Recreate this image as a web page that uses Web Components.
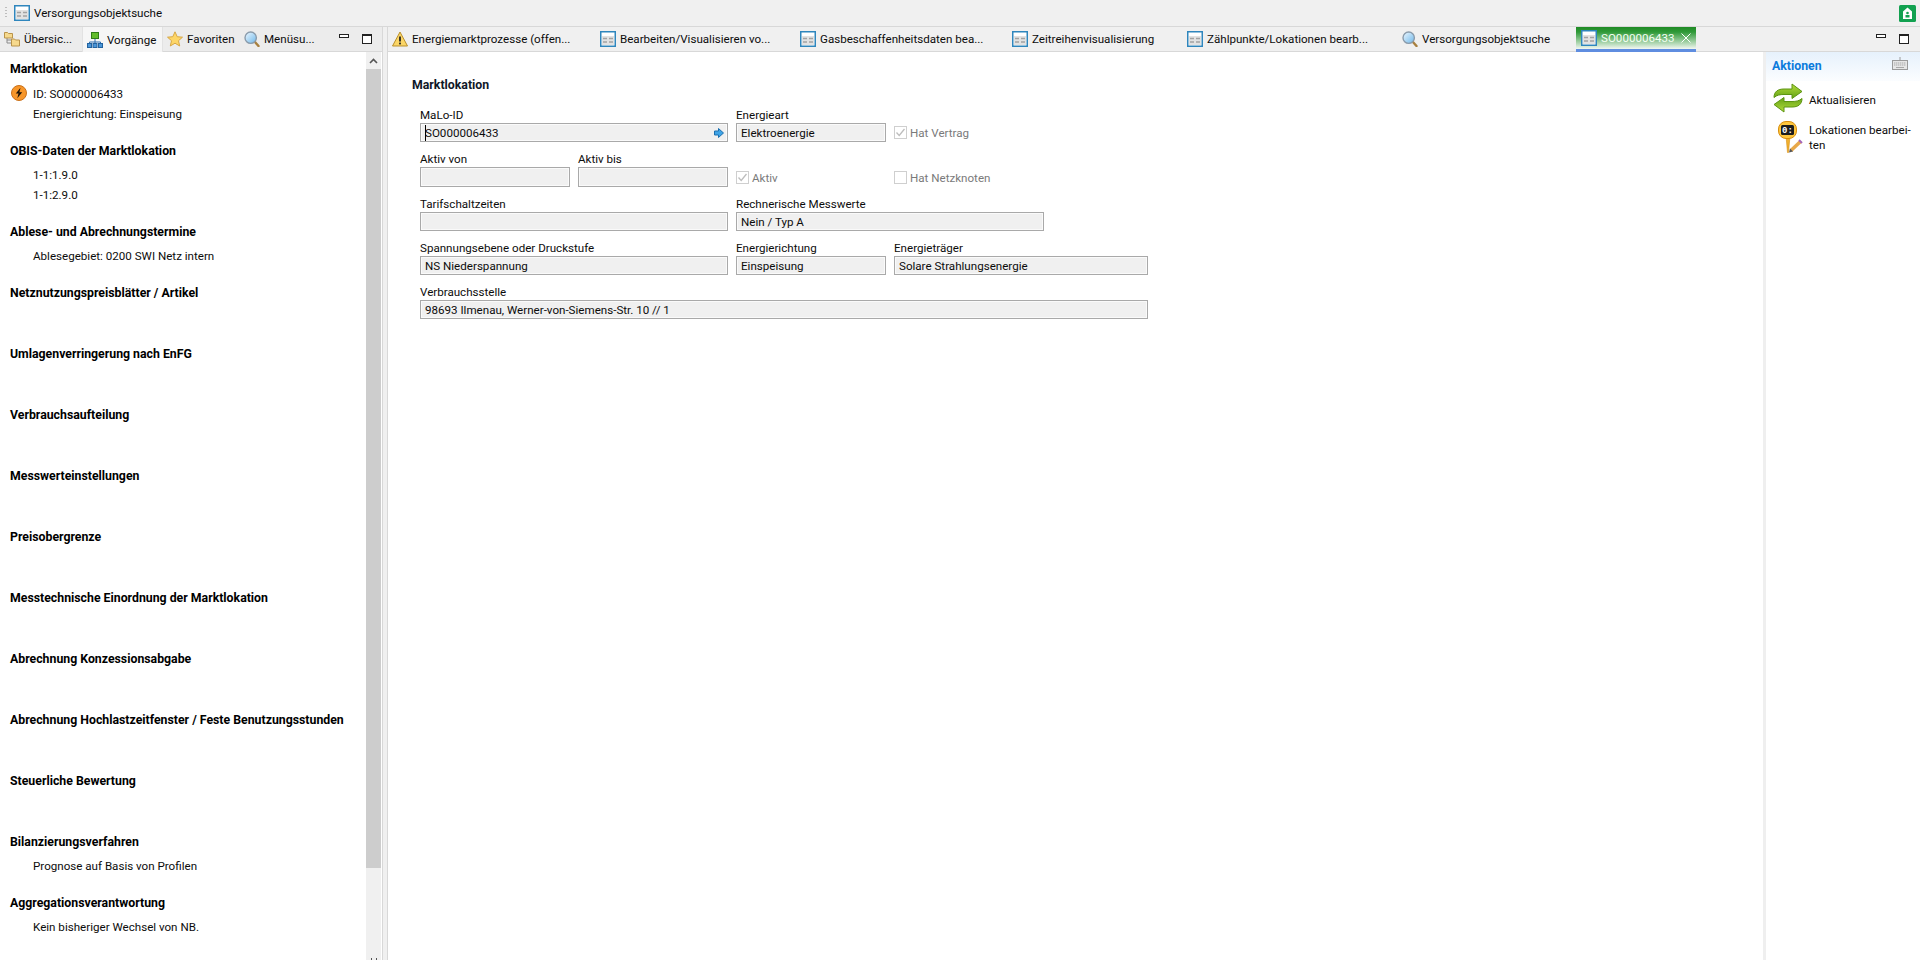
<!DOCTYPE html>
<html lang="de">
<head>
<meta charset="utf-8">
<title>Versorgungsobjektsuche</title>
<style>
  html, body { margin: 0; height: 100%; overflow: hidden; background: #f0f0f0; }
  body { font: 11.6px/16px Roboto, "Liberation Sans", sans-serif; color: #0c0c0c; }
  sw-workbench { height: 960px; }
</style>
</head>
<body>
<sw-workbench>
  <sw-toolbar slot="top" icon="form">Versorgungsobjektsuche</sw-toolbar>

  <sw-view slot="left">
    <sw-tab slot="tabs" icon="tree" width="82">Übersic...</sw-tab>
    <sw-tab slot="tabs" icon="process" width="81" selected>Vorgänge</sw-tab>
    <sw-tab slot="tabs" icon="star" width="77">Favoriten</sw-tab>
    <sw-tab slot="tabs" icon="search" width="81">Menüsu...</sw-tab>
    <sw-outline>
      <sw-section title="Marktlokation">
        <sw-row icon="energy" style="height: 21px">ID: SO000006433</sw-row>
        <sw-row>Energierichtung: Einspeisung</sw-row>
      </sw-section>
      <sw-section title="OBIS-Daten der Marktlokation">
        <sw-row>1-1:1.9.0</sw-row>
        <sw-row>1-1:2.9.0</sw-row>
      </sw-section>
      <sw-section title="Ablese- und Abrechnungstermine">
        <sw-row>Ablesegebiet: 0200 SWI Netz intern</sw-row>
      </sw-section>
      <sw-section title="Netznutzungspreisblätter / Artikel"></sw-section>
      <sw-section title="Umlagenverringerung nach EnFG"></sw-section>
      <sw-section title="Verbrauchsaufteilung"></sw-section>
      <sw-section title="Messwerteinstellungen"></sw-section>
      <sw-section title="Preisobergrenze"></sw-section>
      <sw-section title="Messtechnische Einordnung der Marktlokation"></sw-section>
      <sw-section title="Abrechnung Konzessionsabgabe"></sw-section>
      <sw-section title="Abrechnung Hochlastzeitfenster / Feste Benutzungsstunden"></sw-section>
      <sw-section title="Steuerliche Bewertung"></sw-section>
      <sw-section title="Bilanzierungsverfahren">
        <sw-row>Prognose auf Basis von Profilen</sw-row>
      </sw-section>
      <sw-section title="Aggregationsverantwortung">
        <sw-row>Kein bisheriger Wechsel von NB.</sw-row>
      </sw-section>
    </sw-outline>
  </sw-view>

  <sw-view slot="main" plain>
    <sw-tab slot="tabs" icon="warning" width="208">Energiemarktprozesse (offen...</sw-tab>
    <sw-tab slot="tabs" icon="form" width="200">Bearbeiten/Visualisieren vo...</sw-tab>
    <sw-tab slot="tabs" icon="form" width="212">Gasbeschaffenheitsdaten bea...</sw-tab>
    <sw-tab slot="tabs" icon="form" width="175">Zeitreihenvisualisierung</sw-tab>
    <sw-tab slot="tabs" icon="form" width="215">Zählpunkte/Lokationen bearb...</sw-tab>
    <sw-tab slot="tabs" icon="search" width="178">Versorgungsobjektsuche</sw-tab>
    <sw-tab slot="tabs" icon="form" width="120" hot>SO000006433</sw-tab>

    <sw-editor>
      <sw-form title="Marktlokation">
        <sw-field label="MaLo-ID" value="SO000006433" link style="grid-column: 1 / 3"></sw-field>
        <sw-field label="Energieart" value="Elektroenergie" style="grid-column: 3"></sw-field>
        <sw-check checked style="grid-column: 4 / 6">Hat Vertrag</sw-check>

        <sw-field label="Aktiv von" style="grid-column: 1"></sw-field>
        <sw-field label="Aktiv bis" style="grid-column: 2"></sw-field>
        <sw-check checked style="grid-column: 3">Aktiv</sw-check>
        <sw-check style="grid-column: 4 / 6">Hat Netzknoten</sw-check>

        <sw-field label="Tarifschaltzeiten" style="grid-column: 1 / 3"></sw-field>
        <sw-field label="Rechnerische Messwerte" value="Nein / Typ A" style="grid-column: 3 / 5"></sw-field>

        <sw-field label="Spannungsebene oder Druckstufe" value="NS Niederspannung" style="grid-column: 1 / 3"></sw-field>
        <sw-field label="Energierichtung" value="Einspeisung" style="grid-column: 3"></sw-field>
        <sw-field label="Energieträger" value="Solare Strahlungsenergie" style="grid-column: 4 / 6"></sw-field>

        <sw-field label="Verbrauchsstelle" value="98693 Ilmenau, Werner-von-Siemens-Str. 10 // 1" style="grid-column: 1 / 6"></sw-field>
      </sw-form>

      <sw-actions slot="side" title="Aktionen">
        <sw-action icon="sync" pad="10">Aktualisieren</sw-action>
        <sw-action icon="pin" pad="2">Lokationen bearbei-ten</sw-action>
      </sw-actions>
    </sw-editor>
  </sw-view>
</sw-workbench>

<script>
// All icons are drawn on a 16 grid unless they bring their own viewBox
const ICONS = {
  form: `<svg width="16" height="16" viewBox="0 0 16 16">
      <rect x=".75" y=".75" width="14.500" height="14.500" fill="#fff" stroke="#2f86bd" stroke-width="1.500"/>
      <rect x="2" y="5" width="12" height="9" fill="#e2e2e2"/>
      <path d="M3 7.500h4M9 7.500h4M3 11h4M9 11h4" stroke="#a2a2a2" stroke-width="1.400"/>
    </svg>`,
  warning: `<svg width="16" height="16" viewBox="0 0 16 16">
      <path d="M8 1 15.500 15H.5z" fill="#fbd667" stroke="#b98f2c" stroke-linejoin="round"/>
      <path d="M8 5.500v5" stroke="#222" stroke-width="1.800"/>
      <rect x="7.100" y="11.600" width="1.800" height="1.800" fill="#222"/>
    </svg>`,
  search: `<svg width="16" height="16" viewBox="0 0 16 16">
      <defs><linearGradient id="g" x1="0" y1="0" x2="1" y2="1"><stop offset="0" stop-color="#eef8ff"/><stop offset="1" stop-color="#6db7ea"/></linearGradient></defs>
      <path d="M10.500 10.500 14.500 15" stroke="#a8803f" stroke-width="2.400" stroke-linecap="round"/>
      <circle cx="6.700" cy="6.700" r="5.700" fill="url(#g)" stroke="#8a9bab" stroke-width="1.400"/>
    </svg>`,
  tree: `<svg width="16" height="16" viewBox="0 0 16 16">
      <path d="M3 7v5h5M3 9h4" fill="none" stroke="#8a8a8a"/>
      <path d="M.5 1.500h3l1 1h4v4.500h-8z" fill="#f6d98d" stroke="#b9934a"/>
      <path d="M7.500 8h3l1 1h4v6h-8z" fill="#f6d98d" stroke="#b9934a"/>
    </svg>`,
  process: `<svg width="16" height="16" viewBox="0 0 16 16">
      <rect x="4.500" y=".5" width="7" height="6" fill="#62bd2c" stroke="#2f7d18"/>
      <path d="M8 7v3M2.500 12v-2h11v2M8 10v2" fill="none" stroke="#2d6fb0"/>
      <rect x=".5" y="11.500" width="4" height="4" fill="#4b96d8" stroke="#23639f"/>
      <rect x="6" y="11.500" width="4" height="4" fill="#4b96d8" stroke="#23639f"/>
      <rect x="11.500" y="11.500" width="4" height="4" fill="#4b96d8" stroke="#23639f"/>
    </svg>`,
  star: `<svg width="16" height="16" viewBox="0 0 16 16">
      <path d="M8 .8 10.200 5.700 15.500 6.200 11.500 9.700 12.700 15 8 12.200 3.300 15 4.500 9.700 .5 6.200 5.800 5.700z" fill="#fdd667" stroke="#d7a745" stroke-linejoin="round"/>
    </svg>`,
  energy: `<svg width="16" height="16" viewBox="0 0 16 16">
      <circle cx="8" cy="8" r="7.500" fill="#f7962a" stroke="#c9701a"/>
      <path d="M9.500 2.800 4.800 8.600h2.700L6.300 13.200 11.200 7.200H8.400z" fill="#1b1208"/>
    </svg>`,
  sync: `<svg width="30" height="30" viewBox="0 0 30 30">
      <defs><linearGradient id="s" x1="0" y1="0" x2="0" y2="1"><stop offset="0" stop-color="#b4dc3c"/><stop offset="1" stop-color="#64a316"/></linearGradient></defs>
      <path id="a" d="M1 14.500C1 8.500 5 6 11 6h8V1l10 7.500L19 15.500V11.500h-8C7 11.500 4 12 1 14.500z" fill="url(#s)" stroke="#5c9412" stroke-linejoin="round"/>
      <use href="#a" transform="rotate(180 15 15)"/>
    </svg>`,
  pin: `<svg width="30" height="32" viewBox="-5 0 30 32">
      <path d="M8 15h4L10.500 31.500h-1z" fill="#f0b030" stroke="#d88e10" stroke-width=".6"/>
      <rect x=".5" y=".5" width="18" height="17" rx="7.500" fill="#fdc63e" stroke="#d88e10"/>
      <rect x="3" y="4" width="13" height="10" rx="1.500" fill="#1c1c1c"/>
      <text x="9.500" y="12" font-size="9" font-weight="700" fill="#fff" text-anchor="middle" font-family="Liberation Mono, monospace">0:</text>
      <path d="M13 29.500 22.500 20.500" stroke="#e8a84a" stroke-width="3.600"/>
      <path d="M21 19 24 22" stroke="#a566b8" stroke-width="2"/>
      <path d="M11 31.500 12 27.500 15 30.500z" fill="#555"/>
    </svg>`,
  keyboard: `<svg width="16" height="13" viewBox="0 0 16 13">
      <path d="M8 0v3" stroke="#9a9a9a"/>
      <rect x=".5" y="3.500" width="15" height="9" fill="#e6e6e6" stroke="#9a9a9a"/>
      <path d="M2 6h12M2 8h12" stroke="#a8a8a8" stroke-dasharray="1.400 .6"/>
      <path d="M4 10.500h8" stroke="#a8a8a8"/>
    </svg>`,
  lock: `<svg width="17" height="17" viewBox="0 0 17 17">
      <rect width="17" height="17" rx="1.500" fill="#12a150"/>
      <path d="M8.500 2.500 13 6.500V14H4V6.500z" fill="#fff"/>
      <circle cx="8.500" cy="8" r="1.300" fill="#12a150"/>
      <rect x="6.500" y="10" width="4" height="2.500" fill="#12a150"/>
    </svg>`,
  arrow: `<svg width="10" height="10" viewBox="0 0 10 10">
      <path d="M.5 3h4V.5L9.500 5l-5 4.500V7h-4z" fill="#3fa4e6" stroke="#1b6fb0"/>
    </svg>`
};

class SwIcon extends HTMLElement {
  connectedCallback() {
    if(!this.shadowRoot) this.attachShadow({ mode: 'open' });
    this.shadowRoot.innerHTML = `
      <style>
        :host { display: inline-flex; flex: none; line-height: 0; }
      </style>
      ${ICONS[this.getAttribute('name')] || ''}
    `;
  }
}

class SwWorkbench extends HTMLElement {
  constructor() {
    super();
    this._root = this.attachShadow({ mode: 'open' });
  }

  connectedCallback() {
    this._root.innerHTML = `
      <style>
        :host { display: flex; flex-direction: column; }
        .panes { flex: 1; min-height: 0; display: flex; }
        ::slotted([slot="left"]) { width: 383px; flex: none; }
        ::slotted([slot="main"]) { flex: 1; min-width: 0; margin-left: 4px; }
      </style>
      <slot name="top"></slot>
      <div class="panes">
        <slot name="left"></slot>
        <slot name="main"></slot>
      </div>
    `;
  }
}

class SwToolbar extends HTMLElement {
  constructor() {
    super();
    this._root = this.attachShadow({ mode: 'open' });
  }

  connectedCallback() {
    this._root.innerHTML = `
      <style>
        :host {
          display: flex;
          align-items: center;
          height: 26px;
          padding: 0 4px 0 5px;
          background: #f0f0f0;
          border-bottom: 1px solid #d8d8d8;
          box-sizing: content-box;
        }
        .grip {
          width: 2px;
          height: 12px;
          margin-right: 7px;
          background: repeating-linear-gradient(#bdbdbd 0 1px, transparent 1px 3px);
        }
        .label { margin-left: 4px; flex: 1; }
      </style>
      <div class="grip"></div>
      <sw-icon name="${this.getAttribute('icon')}"></sw-icon>
      <div class="label"><slot></slot></div>
      <sw-icon name="lock"></sw-icon>
    `;
  }
}

class SwView extends HTMLElement {
  constructor() {
    super();
    this._root = this.attachShadow({ mode: 'open' });
  }

  connectedCallback() {
    this._root.innerHTML = `
      <style>
        :host {
          display: flex;
          flex-direction: column;
          min-height: 0;
          background: #fff;
          border-right: 1px solid #d8d8d8;
          box-sizing: border-box;
        }
        :host([plain]) { border-right: 0; border-left: 1px solid #d8d8d8; }
        .strip {
          display: flex;
          height: 25px;
          flex: none;
          box-sizing: border-box;
          background: #ececec;
          border-bottom: 1px solid #d8d8d8;
        }
        :host([plain]) .strip { background: #f0f0f0; }
        .controls {
          margin-left: auto;
          display: flex;
          gap: 13px;
          padding: 7px 10px 0 0;
        }
        :host([plain]) .controls { padding-right: 11px; }
        .min { width: 8px; height: 2px; border: 1px solid #222; background: #fff; }
        .max { width: 8px; height: 7px; border: 1px solid #222; border-top-width: 2px; background: #fff; }
        .body { flex: 1; min-height: 0; display: flex; }
      </style>
      <div class="strip">
        <slot name="tabs"></slot>
        <div class="controls"><div class="min"></div><div class="max"></div></div>
      </div>
      <div class="body"><slot></slot></div>
    `;
  }
}

class SwTab extends HTMLElement {
  constructor() {
    super();
    this._root = this.attachShadow({ mode: 'open' });
  }

  connectedCallback() {
    const hot = this.hasAttribute('hot');
    this._root.innerHTML = `
      <style>
        :host {
          display: flex;
          align-items: center;
          flex: none;
          box-sizing: border-box;
          width: ${this.getAttribute('width')}px;
          height: 24px;
          padding-left: ${hot ? 5 : 4}px;
          white-space: nowrap;
          overflow: hidden;
        }
        :host([selected]) { background: #f6f6f6; height: 25px; border: 1px solid #e2e2e2; border-width: 0 1px; padding-left: 4px; }
        :host([hot]) {
          height: 25px;
          background: linear-gradient(#1f8a24 0, #2f9a38 5px, #f2f7f2 22px);
          border-bottom: 3px solid #5f8de0;
          color: #f4fff4;
        }
        .label { margin-left: 4px; }
        .close { margin-left: 5px; width: 12px; height: 12px; flex: none; }
      </style>
      <sw-icon name="${this.getAttribute('icon')}"></sw-icon>
      <span class="label"><slot></slot></span>
      ${hot ? `<svg class="close" viewBox="0 0 12 12"><path d="M1.500 1.500l9 9M10.500 1.500l-9 9" stroke="#fff" fill="none"/></svg>` : ''}
    `;
  }
}

class SwOutline extends HTMLElement {
  constructor() {
    super();
    this._root = this.attachShadow({ mode: 'open' });
  }

  connectedCallback() {
    this._root.innerHTML = `
      <style>
        :host { display: flex; flex: 1; min-width: 0; }
        .content { flex: 1; min-width: 0; padding: 9px 0 0 10px; overflow: hidden; }
        .bar {
          width: 15px;
          flex: none;
          margin-right: 1px;
          display: flex;
          flex-direction: column;
          background: #f0f0f0;
          overflow: hidden;
        }
        .up { height: 17px; flex: none; display: flex; justify-content: center; align-items: center; }
        .thumb { height: 799px; flex: none; background: #cdcdcd; }
        .down { margin-top: auto; height: 2px; display: flex; justify-content: center; gap: 4px; }
        .down i { width: 1px; height: 2px; background: #555; }
      </style>
      <div class="content"><slot></slot></div>
      <div class="bar">
        <div class="up"><svg width="9" height="6" viewBox="0 0 9 6"><path d="M1 5l3.500-3.500L8 5" fill="none" stroke="#555" stroke-width="1.600"/></svg></div>
        <div class="thumb"></div>
        <div class="down"><i></i><i></i></div>
      </div>
    `;
  }
}

class SwSection extends HTMLElement {
  constructor() {
    super();
    this._root = this.attachShadow({ mode: 'open' });
  }

  connectedCallback() {
    this._root.innerHTML = `
      <style>
        :host { display: block; padding-bottom: 19px; }
        h3 { margin: 0 0 6px; font-size: 12.3px; line-height: 16px; font-weight: 700; color: #000; white-space: nowrap; }
        .rows { min-height: 20px; }
      </style>
      <h3>${this.getAttribute('title')}</h3>
      <div class="rows"><slot></slot></div>
    `;
    this.removeAttribute('title');
  }
}

class SwRow extends HTMLElement {
  constructor() {
    super();
    this._root = this.attachShadow({ mode: 'open' });
  }

  connectedCallback() {
    const icon = this.getAttribute('icon');
    this._root.innerHTML = `
      <style>
        :host { display: flex; align-items: center; height: 20px; padding-left: 23px; position: relative; white-space: nowrap; }
        sw-icon { position: absolute; left: 1px; top: 2px; }
      </style>
      ${icon ? `<sw-icon name="${icon}"></sw-icon>` : ''}
      <slot></slot>
    `;
  }
}

class SwEditor extends HTMLElement {
  constructor() {
    super();
    this._root = this.attachShadow({ mode: 'open' });
  }

  connectedCallback() {
    this._root.innerHTML = `
      <style>
        :host { display: flex; flex: 1; min-width: 0; }
        ::slotted(sw-form) { flex: 1; min-width: 0; }
        ::slotted([slot="side"]) { width: 154px; flex: none; border-left: 3px solid #efefef; }
      </style>
      <slot></slot>
      <slot name="side"></slot>
    `;
  }
}

class SwForm extends HTMLElement {
  constructor() {
    super();
    this._root = this.attachShadow({ mode: 'open' });
  }

  connectedCallback() {
    this._root.innerHTML = `
      <style>
        :host { display: block; padding: 25px 0 0 24px; }
        h2 { margin: 0 0 14px; font-size: 12.3px; line-height: 16px; font-weight: 700; color: #101828; }
        .grid {
          display: grid;
          margin-left: 8px;
          grid-template-columns: 150px 150px 150px 150px 96px;
          grid-template-rows: 35px 36px 35px 35px 35px;
          column-gap: 8px;
          row-gap: 9px;
        }
      </style>
      <h2>${this.getAttribute('title')}</h2>
      <div class="grid"><slot></slot></div>
    `;
    this.removeAttribute('title');
  }
}

class SwField extends HTMLElement {
  constructor() {
    super();
    this._root = this.attachShadow({ mode: 'open' });
  }

  connectedCallback() {
    const link = this.hasAttribute('link');
    this._root.innerHTML = `
      <style>
        :host { display: flex; flex-direction: column; min-width: 0; }
        .label { height: 16px; line-height: 16px; white-space: nowrap; }
        .box {
          flex: 1;
          display: flex;
          align-items: center;
          box-sizing: border-box;
          padding: 0 3px 0 4px;
          border: 1px solid #a9a9a9;
          box-shadow: inset 0 0 0 1px #fafafa;
          background: #f0f0f0;
          white-space: nowrap;
          overflow: hidden;
        }
        .value { flex: 1; }
        .caret { width: 1px; height: 16px; background: #000; margin-right: -1px; flex: none; }
      </style>
      <div class="label">${this.getAttribute('label')}</div>
      <div class="box">
        ${link ? '<i class="caret"></i>' : ''}
        <span class="value">${this.getAttribute('value') || ''}</span>
        ${link ? '<sw-icon name="arrow"></sw-icon>' : ''}
      </div>
    `;
  }
}

class SwCheck extends HTMLElement {
  constructor() {
    super();
    this._root = this.attachShadow({ mode: 'open' });
  }

  connectedCallback() {
    this._root.innerHTML = `
      <style>
        :host {
          display: flex;
          align-items: center;
          align-self: end;
          height: 19px;
          color: #7a7a7a;
          white-space: nowrap;
        }
        .mark {
          width: 11px;
          height: 11px;
          flex: none;
          margin-right: 3px;
          border: 1px solid #cfcfcf;
          background: #fff;
        }
        svg { display: block; }
      </style>
      <div class="mark">
        ${this.hasAttribute('checked') ? '<svg width="11" height="11" viewBox="0 0 11 11"><path d="M1.500 5.500 4.200 8.500 9.500 2" fill="none" stroke="#bdbdbd" stroke-width="1.300"/></svg>' : ''}
      </div>
      <slot></slot>
    `;
  }
}

class SwActions extends HTMLElement {
  constructor() {
    super();
    this._root = this.attachShadow({ mode: 'open' });
  }

  connectedCallback() {
    this._root.innerHTML = `
      <style>
        :host { display: block; background: #fff; }
        .head {
          display: flex;
          align-items: center;
          justify-content: space-between;
          box-sizing: border-box;
          height: 29px;
          padding: 0 12px 2px 6px;
          background: linear-gradient(#e6f1fc, #fbfdff);
          font-size: 12.3px;
          font-weight: 700;
          color: #0b7bdc;
        }
        .items { display: flex; flex-direction: column; padding: 2px 2px 0 5px; gap: 8px; }
      </style>
      <div class="head"><span>${this.getAttribute('title')}</span><sw-icon name="keyboard" style="margin-top: -4px"></sw-icon></div>
      <div class="items"><slot></slot></div>
    `;
    this.removeAttribute('title');
  }
}

class SwAction extends HTMLElement {
  constructor() {
    super();
    this._root = this.attachShadow({ mode: 'open' });
  }

  connectedCallback() {
    this._root.innerHTML = `
      <style>
        :host { display: flex; align-items: flex-start; line-height: 15px; }
        .icon { width: 34px; margin-right: 4px; flex: none; display: flex; justify-content: center; }
        .text { padding-top: ${this.getAttribute('pad') || 0}px; min-width: 0; }
      </style>
      <div class="icon"><sw-icon name="${this.getAttribute('icon')}"></sw-icon></div>
      <div class="text"><slot></slot></div>
    `;
  }
}

window.customElements.define('sw-icon', SwIcon);
window.customElements.define('sw-workbench', SwWorkbench);
window.customElements.define('sw-toolbar', SwToolbar);
window.customElements.define('sw-view', SwView);
window.customElements.define('sw-tab', SwTab);
window.customElements.define('sw-outline', SwOutline);
window.customElements.define('sw-section', SwSection);
window.customElements.define('sw-row', SwRow);
window.customElements.define('sw-editor', SwEditor);
window.customElements.define('sw-form', SwForm);
window.customElements.define('sw-field', SwField);
window.customElements.define('sw-check', SwCheck);
window.customElements.define('sw-actions', SwActions);
window.customElements.define('sw-action', SwAction);
</script>
</body>
</html>
